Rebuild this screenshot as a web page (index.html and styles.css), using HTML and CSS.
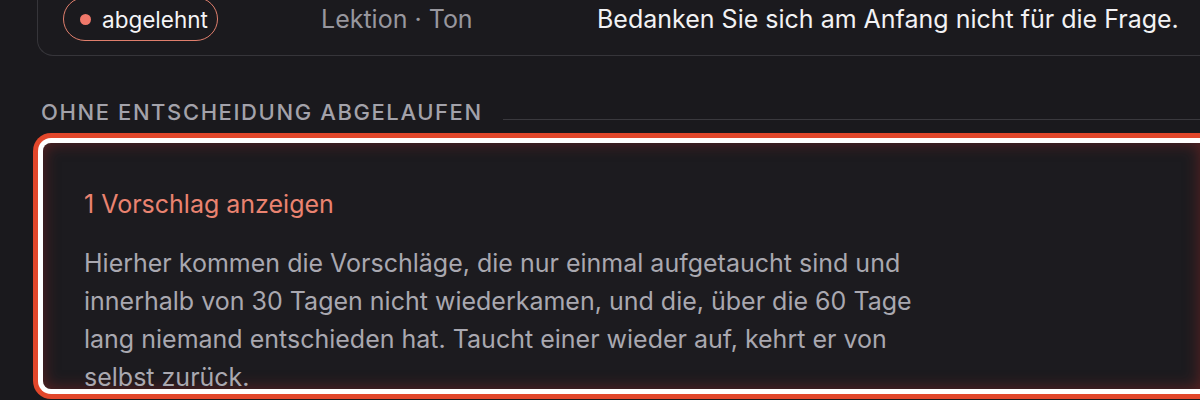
FILE: index.html
```html
<!DOCTYPE html>
<html lang="de">
<head>
<meta charset="utf-8">
<title>Vorschläge</title>
<link rel="stylesheet" href="styles.css">
</head>
<body>
<main class="page">
  <div class="row-card">
    <span class="badge"><span class="badge-dot"></span>abgelehnt</span>
    <span class="lesson">Lektion · Ton</span>
    <span class="rule-text">Bedanken Sie sich am Anfang nicht für die Frage.</span>
  </div>

  <div class="section-head">
    <h2 class="section-title">Ohne Entscheidung abgelaufen</h2>
    <span class="section-line"></span>
  </div>

  <div class="expander">
    <div class="expander-title">1 Vorschlag anzeigen</div>
    <p class="expander-text">Hierher kommen die Vorschläge, die nur einmal aufgetaucht sind und innerhalb von 30 Tagen nicht wiederkamen, und die, über die 60 Tage lang niemand entschieden hat. Taucht einer wieder auf, kehrt er von selbst zurück.</p>
  </div>
</main>
</body>
</html>
```
FILE: styles.css
```css
html, body {
  margin: 0;
  padding: 0;
  background: #1a191d;
  overflow: hidden;
}
body {
  font-family: Inter, "Noto Sans", sans-serif;
  color: #ececef;
  width: 1200px;
  height: 400px;
}
.page {
  margin-top: -18px;
  padding-left: 37px;
  display: flex;
  flex-direction: column;
}
.row-card {
  display: grid;
  grid-template-columns: 258px 276px auto;
  align-items: center;
  padding: 14px 0 14px 25px;
  border: 1px solid #36353a;
  border-right: none;
  border-radius: 16px 0 0 16px;
  background: #1b1a1e;
  white-space: nowrap;
}
.badge {
  justify-self: start;
  box-sizing: border-box;
  display: inline-flex;
  align-items: center;
  gap: 11px;
  height: 44px;
  width: 155px;
  padding: 0 0 0 16px;
  border: 1.5px solid #e07f6d;
  border-radius: 22px;
  font-size: 22.5px;
  color: #f4f4f6;
}
.badge-dot {
  width: 11px;
  height: 11px;
  border-radius: 50%;
  background: #f0786a;
}
.lesson {
  font-size: 25px;
  color: #98979e;
}
.rule-text {
  font-size: 25px;
  color: #f2f2f4;
}
.section-head {
  display: flex;
  align-items: flex-end;
  gap: 20px;
  margin: 43px 0 0 4px;
}
.section-title {
  margin: 0;
  font-size: 22px;
  font-weight: 500;
  letter-spacing: 1.6px;
  text-transform: uppercase;
  color: #a3a2aa;
  line-height: 26px;
  white-space: nowrap;
}
.section-line {
  flex: 1;
  height: 1px;
  background: #3a393e;
  margin-bottom: 5px;
}
.expander {
  box-sizing: border-box;
  margin: 18px 0 0 6px;
  padding: 45px 40px 0 41px;
  height: 246px;
  overflow: hidden;
  background: #1c1b1f;
  border-radius: 8px 0 0 8px;
  box-shadow: inset 0 0 16px rgba(160, 42, 38, 0.5), 0 0 0 5px #ffffff, 0 0 0 10px #e2472b;
}
.expander-title {
  font-size: 25px;
  color: #ea8370;
  line-height: 32px;
}
.expander-text {
  margin: 24px 0 0;
  max-width: 850px;
  font-size: 25px;
  line-height: 38px;
  color: #a9a8b0;
}
```
